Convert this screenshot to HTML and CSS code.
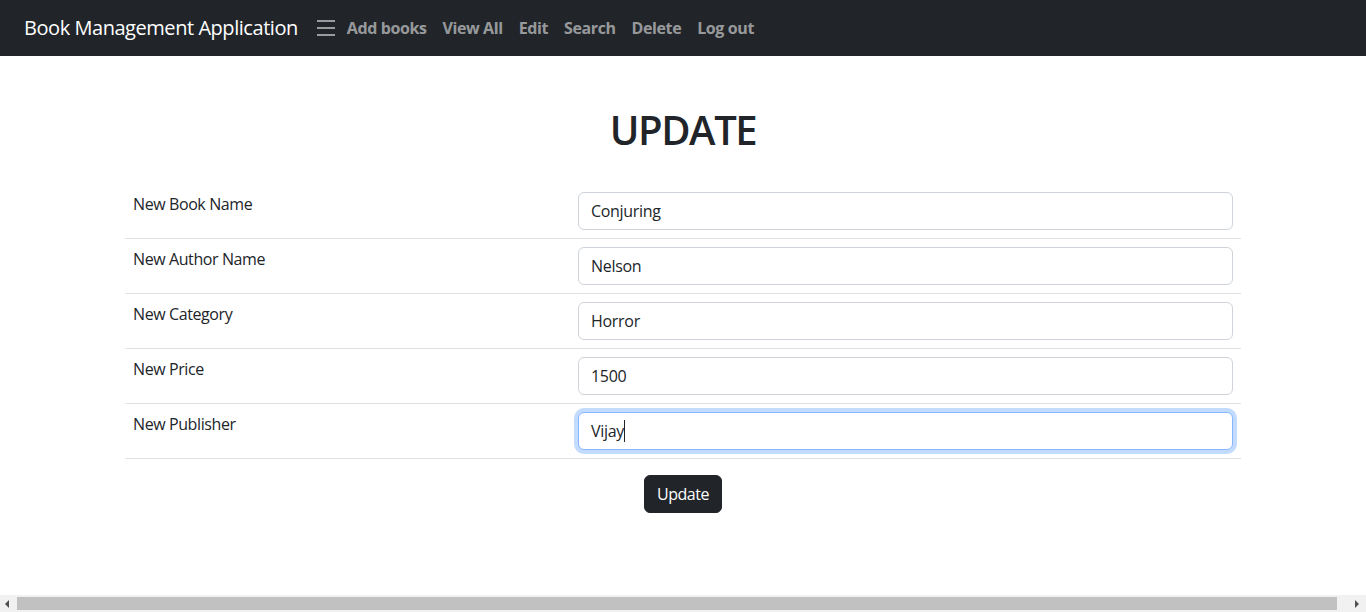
FILE: index.html
```html
<!DOCTYPE html>
<html lang="en">
<head>
<meta charset="utf-8">
<title>Book Management Application</title>
<link rel="stylesheet" href="styles.css">
</head>
<body>
<nav class="navbar">
  <a class="brand" href="#">Book Management Application</a>
  <span class="toggler" aria-hidden="true">
    <svg width="20" height="18" viewBox="0 0 20 18"><path d="M1 2h18M1 9h18M1 16h18" stroke="rgba(255,255,255,0.55)" stroke-width="2" fill="none"/></svg>
  </span>
  <ul class="nav-links">
    <li><a href="#">Add books</a></li>
    <li><a href="#">View All</a></li>
    <li><a href="#">Edit</a></li>
    <li><a href="#">Search</a></li>
    <li><a href="#">Delete</a></li>
    <li><a href="#">Log out</a></li>
  </ul>
</nav>
<main class="container">
  <h1 class="title">UPDATE</h1>
  <form class="update-form">
    <table class="form-table">
      <tr><td class="label">New Book Name</td><td class="field"><input class="input" type="text" value="Conjuring"></td></tr>
      <tr><td class="label">New Author Name</td><td class="field"><input class="input" type="text" value="Nelson"></td></tr>
      <tr><td class="label">New Category</td><td class="field"><input class="input" type="text" value="Horror"></td></tr>
      <tr><td class="label">New Price</td><td class="field"><input class="input" type="text" value="1500"></td></tr>
      <tr><td class="label">New Publisher</td><td class="field"><div class="input focused">Vijay<span class="caret"></span></div></td></tr>
    </table>
    <div class="actions"><button class="btn" type="button">Update</button></div>
  </form>
</main>
<div class="hscroll" aria-hidden="true">
  <span class="arrow arrow-left"></span>
  <span class="thumb"></span>
  <span class="arrow arrow-right"></span>
</div>
</body>
</html>
```
FILE: styles.css
```css
body {
  margin: 0;
  font-family: "Open Sans", "Noto Sans", sans-serif;
  font-size: 16px;
  line-height: 1.5;
  color: #212529;
  background: #fff;
}
.navbar {
  display: flex;
  align-items: center;
  height: 56px;
  background: #212529;
  padding: 0 24px;
}
.brand {
  color: #fff;
  text-decoration: none;
  font-size: 20px;
  letter-spacing: -0.45px;
  margin-right: 18px;
}
.toggler { display: flex; align-items: center; margin-right: 3px; }
.nav-links { display: flex; list-style: none; margin: 0; padding: 0; }
.nav-links a {
  display: block;
  padding: 8px 8px;
  color: rgba(255,255,255,0.55);
  font-weight: 700;
  text-decoration: none;
  letter-spacing: -0.4px;
}
.container {
  width: 1116px;
  margin: 0 auto;
}
.title {
  text-align: center;
  font-size: 40px;
  font-weight: 600;
  line-height: 1.2;
  letter-spacing: -1.4px;
  margin: 50px 0 30px;
}
.form-table {
  width: 100%;
  border-collapse: collapse;
}
.form-table tr { border-bottom: 1px solid #dee2e6; }
.form-table td { padding: 8px; vertical-align: top; }
.label { width: 429px; letter-spacing: -0.4px; }
.input {
  display: block;
  box-sizing: border-box;
  width: 100%;
  height: 38px;
  padding: 6px 12px;
  font: inherit;
  letter-spacing: -0.3px;
  color: #212529;
  border: 1px solid #ced4da;
  border-radius: 6px;
  background: #fff;
}
.focused {
  border-color: #86b7fe;
  box-shadow: 0 0 0 4px rgba(13,110,253,0.25);
}
.caret {
  display: inline-block;
  width: 1px;
  height: 22px;
  background: #212529;
  vertical-align: -5px;
}
.actions { display: flex; justify-content: center; padding-top: 16px; }
.btn {
  font: inherit;
  letter-spacing: -0.5px;
  color: #fff;
  background: #212529;
  border: 1px solid #212529;
  border-radius: 6px;
  padding: 6px 12px;
  height: 38px;
}
.hscroll {
  position: fixed;
  left: 0;
  right: 0;
  bottom: 0;
  height: 17px;
  background: #f1f1f1;
  display: flex;
  align-items: center;
  box-sizing: border-box;
  padding: 0 7px 0 5px;
}
.thumb {
  flex: 1;
  height: 13px;
  margin: 0 18px 0 8px;
  background: #c1c1c1;
}
.arrow { width: 0; height: 0; border-top: 4px solid transparent; border-bottom: 4px solid transparent; }
.arrow-left { border-right: 4px solid #505050; }
.arrow-right { border-left: 4px solid #505050; }
```
